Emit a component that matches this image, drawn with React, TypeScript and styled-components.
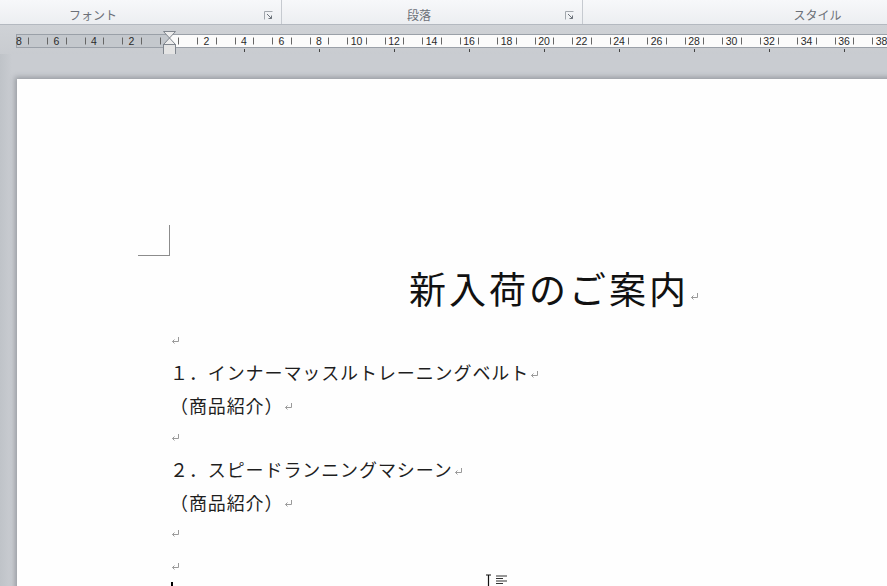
import React from "react"
import styled, {createGlobalStyle} from "styled-components"

const UNIT = 18.75
const ZERO = 153

const GlobalStyle = createGlobalStyle`
    html, body {
        margin: 0;
        padding: 0;
        overflow: hidden;
        background: #c9ccd1;
    }
`

const Window = styled.div`
    width: 887px;
    height: 586px;
    display: flex;
    flex-direction: column;
    overflow: hidden;
    font-family: "Noto Sans CJK JP", "Noto Sans", sans-serif;
`

const Ribbon = styled.div`
    height: 25px;
    display: flex;
    background: linear-gradient(to bottom, #f7f8fa, #eceef1);
    border-bottom: 1px solid #b4b9c0;
    box-sizing: border-box;
    flex-shrink: 0;
`

const Group = styled.div<{ $width?: number }>`
    position: relative;
    display: flex;
    align-items: center;
    justify-content: center;
    width: ${p => (p.$width ? `${p.$width}px` : "auto")};
    flex: ${p => (p.$width ? "0 0 auto" : "1")};
    border-right: ${p => (p.$width ? "1px solid #c6cad0" : "none")};
    box-sizing: border-box;
`

const GroupLabel = styled.span<{ $shift?: number }>`
    font-size: 12px;
    color: #6c7078;
    margin-left: ${p => p.$shift ?? 0}px;
    padding-top: 5px;
`

const Launcher = styled.svg`
    position: absolute;
    right: 8px;
    top: 11px;
`

const Workspace = styled.div`
    flex: 1;
    display: flex;
    flex-direction: column;
    background: linear-gradient(to bottom, #cfd2d6, #c6c9ce 40px, #c9ccd1);
`

const RulerRow = styled.div`
    height: 29px;
    padding: 6px 0 0 16px;
    box-sizing: border-box;
`

const PageArea = styled.div`
    flex: 1;
    display: flex;
    padding: 25px 0 0 17px;
    background: linear-gradient(to right, #bfc3c8, #c9ccd1 12px);
`

const Page = styled.div`
    position: relative;
    width: 1064px;
    flex-shrink: 0;
    background: #fefefe;
    box-shadow: -2px -2px 5px rgba(60, 65, 75, 0.35);
    padding: 146px 0 0 153px;
    box-sizing: border-box;
`

const Corner = styled.div`
    width: 32px;
    height: 31px;
    margin-left: -32px;
    border-right: 1px solid #8c8c8c;
    border-bottom: 1px solid #8c8c8c;
    box-sizing: border-box;
`

const Content = styled.div`
    width: 756px;
`

const Title = styled.div`
    height: 68px;
    display: flex;
    align-items: center;
    justify-content: center;
    font-size: 37px;
    letter-spacing: 3px;
    color: #111;
    padding: 0 0 4px 12px;
    box-sizing: border-box;
`

const Line = styled.div`
    height: 32.3px;
    display: flex;
    align-items: center;
    font-size: 18px;
    letter-spacing: 0.9px;
    color: #1e1e1e;
    white-space: nowrap;
`

const Mark = styled.svg<{ $drop?: number }>`
    flex-shrink: 0;
    margin-left: 1px;
    margin-top: ${p => p.$drop ?? 4}px;
`

const CaretLine = styled.div`
    height: 32px;
    padding-left: 1px;
`

const Caret = styled.div`
    width: 2px;
    height: 20px;
    background: #000;
`

const MouseCursor = styled.svg`
    position: absolute;
    left: 467px;
    top: 495px;
`

const ReturnMark = ({drop}: { drop?: number }) => (
    <Mark $drop={drop} width="9" height="9" viewBox="0 0 9 9">
        <path d="M7.5 1 V5.5 H1.5 M3.5 3.5 L1.5 5.5 L3.5 7.5" fill="none" stroke="#9a9a9a" strokeWidth="1"/>
    </Mark>
)

const LauncherIcon = () => (
    <Launcher width="9" height="9" viewBox="0 0 9 9">
        <path d="M0.5 8.5 V0.5 H8.5" fill="none" stroke="#a3a8ae" strokeWidth="1"/>
        <path d="M3 3 L7.5 7.5 M4.5 7.5 H7.5 V4.5" fill="none" stroke="#6d737b" strokeWidth="1"/>
    </Launcher>
)

const Ruler = () => {
    const ticks: number[] = []
    for (let k = -9; k < 40; k++) {
        const x = ZERO + (k + 0.5) * UNIT
        if (x > 2 && x < 871) ticks.push(x)
    }
    const labels: { x: number, n: number }[] = []
    for (let k = -8; k <= 38; k += 2) {
        if (k !== 0) labels.push({x: ZERO + k * UNIT, n: Math.abs(k)})
    }
    const tabs: number[] = []
    for (let k = 4; k <= 36; k += 4) tabs.push(ZERO + k * UNIT)

    return (
        <svg width="871" height="24" viewBox="0 -3 871 24" style={{display: "block", overflow: "visible"}}>
            <rect x="0.5" y="0.5" width={ZERO} height="13" fill="#c4c8cd" stroke="#9aa0a8"/>
            <rect x={ZERO + 0.5} y="0.5" width="880" height="13" fill="#fbfbfb" stroke="#9aa0a8"/>
            {ticks.map(x => (
                <line key={x} x1={Math.round(x) + 0.5} x2={Math.round(x) + 0.5} y1="3.5" y2="10.5"
                      stroke="#666" strokeWidth="1"/>
            ))}
            {labels.map(l => (
                <text key={l.x} x={l.x} y="11" fontSize="10.5" fill="#2a2a2a" textAnchor="middle"
                      fontFamily="Liberation Sans, sans-serif">{l.n}</text>
            ))}
            {tabs.map(x => (
                <line key={x} x1={Math.round(x) + 0.5} x2={Math.round(x) + 0.5} y1="15" y2="18"
                      stroke="#444" strokeWidth="1"/>
            ))}
            <path d="M147.5 -2.5 H159.5 L153.5 4 Z" fill="#ececec" stroke="#80868e"/>
            <path d="M153.5 4 L159.5 10.5 H147.5 Z" fill="#ececec" stroke="#80868e"/>
            <rect x="147.5" y="10.5" width="12" height="10" fill="#e4e4e4" stroke="#80868e"/>
        </svg>
    )
}

export default function App() {
    return (
        <Window>
            <GlobalStyle/>
            <Ribbon>
                <Group $width={282}>
                    <GroupLabel $shift={-95}>フォント</GroupLabel>
                    <LauncherIcon/>
                </Group>
                <Group $width={301}>
                    <GroupLabel $shift={-26}>段落</GroupLabel>
                    <LauncherIcon/>
                </Group>
                <Group>
                    <GroupLabel $shift={165}>スタイル</GroupLabel>
                </Group>
            </Ribbon>
            <Workspace>
                <RulerRow>
                    <Ruler/>
                </RulerRow>
                <PageArea>
                    <Page>
                        <Corner/>
                        <Content>
                            <Title>新入荷のご案内<ReturnMark drop={16}/></Title>
                            <Line><ReturnMark drop={0}/></Line>
                            <Line>１．インナーマッスルトレーニングベルト<ReturnMark/></Line>
                            <Line>（商品紹介）<ReturnMark/></Line>
                            <Line><ReturnMark drop={0}/></Line>
                            <Line>２．スピードランニングマシーン<ReturnMark/></Line>
                            <Line>（商品紹介）<ReturnMark/></Line>
                            <Line><ReturnMark drop={0}/></Line>
                            <Line><ReturnMark drop={0}/></Line>
                            <CaretLine><Caret/></CaretLine>
                        </Content>
                        <MouseCursor width="26" height="14" viewBox="0 0 26 14">
                            <path d="M2 1 H7 M4.5 1 V13" stroke="#111" strokeWidth="1.2" fill="none"/>
                            <path d="M12 2 H23 M12 4.5 H19 M12 7 H23 M12 9.5 H19" stroke="#333" strokeWidth="1.2"
                                  fill="none"/>
                        </MouseCursor>
                    </Page>
                </PageArea>
            </Workspace>
        </Window>
    )
}
